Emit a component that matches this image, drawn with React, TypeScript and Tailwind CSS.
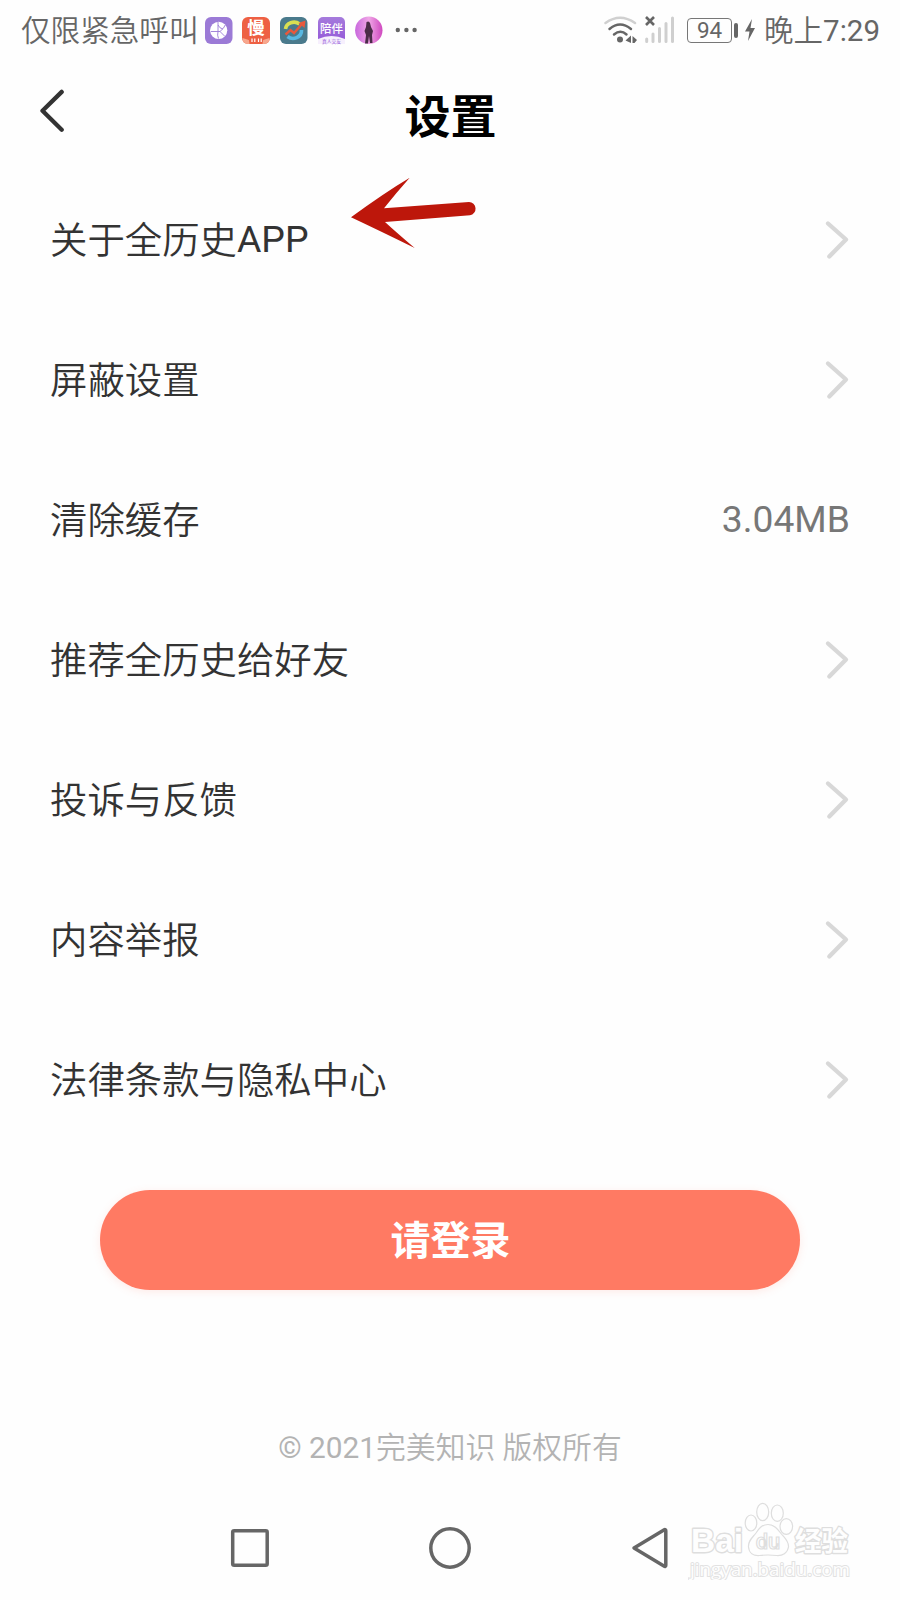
const rows = [
    { id: '1', label: '关于全历史', latin: 'APP' },
    { id: '2', label: '屏蔽设置' },
    { id: '3', label: '清除缓存', value: '3.04MB' },
    { id: '4', label: '推荐全历史给好友' },
    { id: '5', label: '投诉与反馈' },
    { id: '6', label: '内容举报' },
    { id: '7', label: '法律条款与隐私中心' },
]

const cjk = 'font-["Roboto","Noto_Sans_CJK_SC",sans-serif]'

function AppIcons() {
    return (
        <svg width="216" height="30" viewBox="204 15 216 30" className="shrink-0">
            <defs>
                <linearGradient id="violet" x1="0" y1="0" x2="0" y2="1">
                    <stop offset="0" stopColor="#a57bdc" />
                    <stop offset="1" stopColor="#9355d8" />
                </linearGradient>
                <linearGradient id="pink" x1="0" y1="0" x2="1" y2="0">
                    <stop offset="0" stopColor="#c867dd" />
                    <stop offset="0.5" stopColor="#f0a6e6" />
                    <stop offset="1" stopColor="#cf48bf" />
                </linearGradient>
            </defs>
            {/* globe */}
            <rect x="205" y="17" width="27.5" height="27" rx="6" fill="#9b7ad6" />
            <circle cx="218.7" cy="30.3" r="8.6" fill="#fff" />
            <path d="M218 22v9.500M211 31.500h9l5 5M220 31.500q4-3 5.500-7M218 31.500q-1 4 .500 7M218 25q1.500 3.500 5 4" fill="none" stroke="#9b7ad6" strokeWidth="0.9" />
            {/* manhua */}
            <rect x="242" y="17" width="28" height="27" rx="6" fill="#ee6043" />
            <path d="M242.500 38q6 2.500 13.500 2.500t13.500-2.500q0 6-6 6h-15q-6 0-6-6z" fill="#f7a78e" />
            <path d="M248.500 37.500h15l-1 6.500h-13z" fill="#ee6043" />
            <text x="256" y="34.300" textAnchor="middle" fontSize="17.500" fontWeight="700" fill="#fff">慢</text>
            <path d="M252 38.500v3.500M254.800 38.500v3.500M258.500 38.500v3.500M261.200 38.500v3.500" stroke="#fff" strokeWidth="1.200" />
            {/* trend */}
            <rect x="280" y="17" width="27.500" height="27" rx="6" fill="#4a7a8c" />
            <path d="M285.500 29a8.500 7.500 0 0 1 14-5" fill="none" stroke="#d9df52" strokeWidth="3.600" />
            <path d="M301.500 30a8.500 8 0 0 1-14 6.500" fill="none" stroke="#58b8e2" strokeWidth="3.600" />
            <path d="M285.500 34.500l5-4.500 3.500 3 7.500-8.500" fill="none" stroke="#e8583c" strokeWidth="2.400" />
            <path d="M298.500 23l7-2.500-1 7.500z" fill="#e8583c" />
            {/* peiban */}
            <rect x="318" y="17" width="27" height="27" rx="5" fill="url(#violet)" />
            <path d="M318 39q13.500-6 27 0v5h-27z" fill="#f6effd" />
            <text x="331.500" y="33" textAnchor="middle" fontSize="11.500" fontWeight="500" fill="#fff">陪伴</text>
            <text x="331.500" y="42.800" textAnchor="middle" fontSize="4.800" fill="#9355d8">真人交友</text>
            {/* silhouette */}
            <circle cx="368.800" cy="30.300" r="13.700" fill="url(#pink)" />
            <path d="M366.500 22q2.500-1.500 3.500 1l1 4 2 4-1 4 .500 8h-2.500l-1-7-1 7.500h-3l1-8.500-1.500-4 1.500-4z" fill="#4a2c48" />
            <circle cx="397.800" cy="30" r="2.200" fill="#666" />
            <circle cx="406.400" cy="30" r="2.200" fill="#666" />
            <circle cx="414.600" cy="30" r="2.200" fill="#666" />
        </svg>
    )
}

function SignalIcons() {
    return (
        <svg width="74" height="32" viewBox="602 14 74 32" className="shrink-0">
            <g fill="none" strokeWidth="2.500" strokeLinecap="round">
                <path d="M605.500 23q14.500-10.500 29.500 0" stroke="#d0d0d0" />
                <path d="M609.500 29q10.500-9 21.500 0M614 34.500q6.500-5.500 12.500 0" stroke="#666" />
            </g>
            <circle cx="620" cy="39.500" r="3" fill="#666" />
            <path d="M631 35.500v7.500l-5.500-2.500zM632.500 36l4.500 4-2.500 3h-2z" fill="#666" />
            <path d="M646 17l8 8M654 17l-8 8" stroke="#666" strokeWidth="2.600" />
            <path d="M646.700 39v2.500M653 34v7.500M659.500 28.500v13M666 23.500v18M672.500 18v23.500" stroke="#cfcfcf" strokeWidth="3" strokeLinecap="round" />
        </svg>
    )
}

function Watermark() {
    return (
        <svg width="166" height="82" viewBox="688 1498 166 82" className="absolute left-[688px] top-[1498px]">
            <g fill="#fefefe" stroke="#dedede" strokeWidth="1.200">
                <g strokeWidth="2.800" strokeLinejoin="round" style={{ paintOrder: 'stroke' }}>
                    <text x="691" y="1552" fontSize="34" fontWeight="700" textLength="52" lengthAdjust="spacingAndGlyphs" className='font-["Liberation_Sans",sans-serif]'>Bai</text>
                    <text x="795" y="1551" fontSize="27" fontWeight="700" textLength="53" lengthAdjust="spacingAndGlyphs">经验</text>
                </g>
                <path d="M768 1524.500c-6 0-9 4-12 8.500-4 5-8 8-7.500 14 .500 6 5 9 11 8.500 6-.700 11-.700 17 0 6 .500 11-2.500 12-8.500.500-6-4-9-7.500-13.500s-7-9-13-9z" />
                <ellipse cx="751" cy="1523" rx="5.800" ry="8" />
                <ellipse cx="762.700" cy="1512" rx="6" ry="8.700" />
                <ellipse cx="777.300" cy="1513.200" rx="6" ry="8.200" />
                <ellipse cx="786.300" cy="1526.500" rx="6.300" ry="7.800" />
                <text x="768" y="1549" fontSize="22" fontWeight="500" textAnchor="middle">du</text>
            </g>
            <text
                x="690"
                y="1575.500"
                fontSize="18.500"
                fill="#fefefe"
                stroke="#e2e2e2"
                strokeWidth="2"
                textLength="160"
                lengthAdjust="spacingAndGlyphs"
                style={{ paintOrder: 'stroke' }}
                className='font-["Open_Sans",sans-serif]'
            >
                jingyan.baidu.com
            </text>
        </svg>
    )
}

export default function SettingsPage() {
    return (
        <div className={`relative flex h-[1600px] w-[900px] flex-col overflow-hidden bg-[#fefefe] ${cjk}`}>
            {/* Status bar */}
            <div className="flex h-[60px] shrink-0 items-center pl-[21px] pr-5 text-[#666]">
                <span className="w-[183px] whitespace-nowrap pt-1 text-[29.6px] font-[350] leading-none">仅限紧急呼叫</span>
                <AppIcons />
                <div className="ml-auto flex items-center">
                    <SignalIcons />
                    <div className="ml-[11px] flex h-[25px] w-[45px] items-center justify-center rounded-[4px] border-[1.5px] border-[#777] pt-px text-[22.5px] leading-none">94</div>
                    <span className="ml-[2px] h-[15px] w-1 rounded-sm bg-[#666]" />
                    <svg width="12" height="24" viewBox="0 0 12 24" className="ml-[6px]">
                        <path d="M8 1L1 13.500h4.500L4 23l7-13H6.500z" fill="#666" />
                    </svg>
                    <span className="ml-[8px] whitespace-nowrap pt-1 text-[29.5px] leading-none">
                        <span className="font-[350]">晚上</span>7:29
                    </span>
                </div>
            </div>

            {/* Header */}
            <header className="flex h-[110px] shrink-0 items-center px-[38px]">
                <svg width="28" height="44" viewBox="38 89 28 44" className="mb-2">
                    <path d="M61.700 91.900L42.500 110.800L61.700 129.700" fill="none" stroke="#333" strokeWidth="4.300" strokeLinecap="round" strokeLinejoin="round" />
                </svg>
                <h1 className="flex-1 pr-[27px] pt-1 text-center text-[46px] font-bold leading-none text-black">设置</h1>
            </header>

            {/* Setting rows */}
            <ul className="shrink-0">
                {rows.map((row) => (
                    <li key={row.id} className="flex h-[140px] items-center justify-between pl-[50px] pr-[50px]">
                        <span className="pt-[3px] text-[37.4px] font-[350] leading-none text-[#333]">
                            {row.label}
                            {row.latin && <span className="relative -top-[2px] font-normal">{row.latin}</span>}
                        </span>
                        {row.value ? (
                            <span className="text-[37.2px] leading-none text-[#777]">{row.value}</span>
                        ) : (
                            <svg width="26" height="40" viewBox="824 220 26 40">
                                <path d="M828 223.500L846 239.500L829.300 256.500" fill="none" stroke="#d8d8d8" strokeWidth="4.300" strokeLinecap="round" strokeLinejoin="round" />
                            </svg>
                        )}
                    </li>
                ))}
            </ul>

            <button className="mx-[100px] mt-10 h-[100px] shrink-0 rounded-full bg-[#ff7a63] pl-px pt-1 text-[40px] font-bold leading-none text-white shadow-[0_2px_8px_rgba(255,122,99,0.15)]">
                请登录
            </button>

            <p className="mt-[143px] shrink-0 text-center text-[29.8px] leading-[30px] text-[#b3b3b3]">
                © 2021<span className="font-[350]">完美知识 版权所有</span>
            </p>

            {/* Navigation bar */}
            <nav className="mt-auto flex h-[105px] shrink-0 items-center justify-center gap-[156px]">
                <svg width="44" height="44" viewBox="0 0 44 44" fill="none" stroke="#666" strokeWidth="3.500" strokeLinejoin="round">
                    <rect x="4.700" y="4.700" width="34.500" height="34.500" rx="1.500" />
                </svg>
                <svg width="44" height="44" viewBox="0 0 44 44" fill="none" stroke="#666" strokeWidth="3.500">
                    <circle cx="22" cy="22" r="19.200" />
                </svg>
                <svg width="44" height="44" viewBox="0 0 44 44" fill="none" stroke="#666" strokeWidth="3.500" strokeLinejoin="round">
                    <path d="M6 22L36.300 3.800a1 1 0 0 1 1.500 1v34.500a1 1 0 0 1-1.500 1z" />
                </svg>
            </nav>

            {/* Pointer over the first row */}
            <svg width="130" height="76" viewBox="349 175 130 76" className="absolute left-[349px] top-[175px]">
                <path d="M351 217.300Q384 193 409.700 177.700Q396 193 384 208.300L469 202a6.700 6.700 0 0 1 1 13.300L385 222Q397 233 414.700 248Q380 231 351 217.300z" fill="#bd170b" />
            </svg>

            <Watermark />
        </div>
    )
}
